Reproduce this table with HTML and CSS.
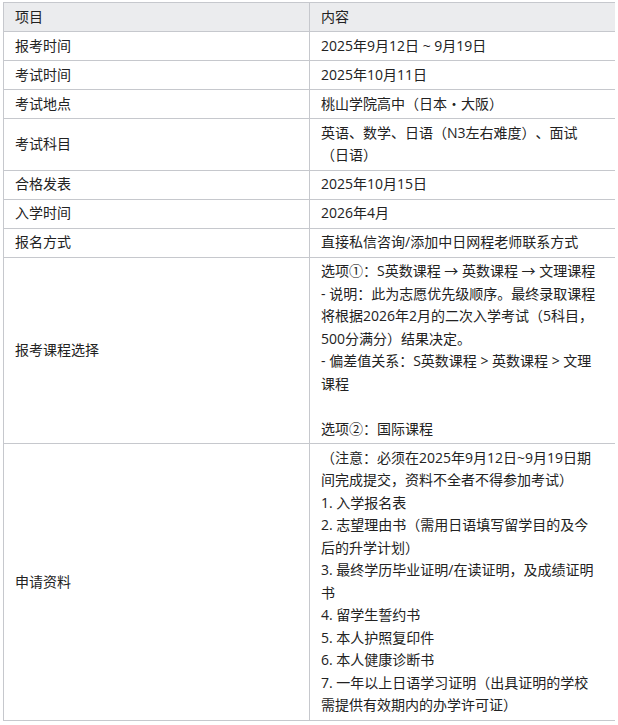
FILE: index.html
```html
<!DOCTYPE html>
<html lang="zh-CN">
<head>
<meta charset="utf-8">
<title>入学考试信息</title>
<link rel="stylesheet" href="styles.css">
</head>
<body>
<table class="info">
  <thead>
    <tr><th>项目</th><th>内容</th></tr>
  </thead>
  <tbody>
    <tr><td>报考时间</td><td>2025年9月12日 ~ 9月19日</td></tr>
    <tr><td>考试时间</td><td>2025年10月11日</td></tr>
    <tr><td>考试地点</td><td>桃山学院高中（日本・大阪）</td></tr>
    <tr><td>考试科目</td><td>英语、数学、日语（N3左右难度）、面试<br>（日语）</td></tr>
    <tr><td>合格发表</td><td>2025年10月15日</td></tr>
    <tr><td>入学时间</td><td>2026年4月</td></tr>
    <tr><td>报名方式</td><td>直接私信咨询/添加中日网程老师联系方式</td></tr>
    <tr><td>报考课程选择</td><td>选项①：S英数课程 → 英数课程 → 文理课程<br>- 说明：此为志愿优先级顺序。最终录取课程<br>将根据2026年2月的二次入学考试（5科目，<br>500分满分）结果决定。<br>- 偏差值关系：S英数课程 &gt; 英数课程 &gt; 文理<br>课程<br><br>选项②：国际课程</td></tr>
    <tr><td>申请资料</td><td>（注意：必须在2025年9月12日~9月19日期<br>间完成提交，资料不全者不得参加考试）<br>1. 入学报名表<br>2. 志望理由书（需用日语填写留学目的及今<br>后的升学计划）<br>3. 最终学历毕业证明/在读证明，及成绩证明<br>书<br>4. 留学生誓约书<br>5. 本人护照复印件<br>6. 本人健康诊断书<br>7. 一年以上日语学习证明（出具证明的学校<br>需提供有效期内的办学许可证）</td></tr>
  </tbody>
</table>
</body>
</html>
```
FILE: styles.css
```css
html, body {
  background: #ffffff;
}
body {
  margin: 2px 3px;
  font-family: "Open Sans", "Noto Sans CJK SC", sans-serif;
  font-size: 14px;
  color: #222222;
}
.info {
  width: 613px;
  border-collapse: collapse;
  table-layout: fixed;
}
.info th,
.info td {
  width: 50%;
  border: 1px solid #c6c8cd;
  padding: 2.75px 6px 2.75px 11px;
  line-height: 22.5px;
  text-align: left;
  vertical-align: middle;
  font-weight: normal;
  text-spacing-trim: space-all;
}
.info th {
  background: #ebecee;
}
```
